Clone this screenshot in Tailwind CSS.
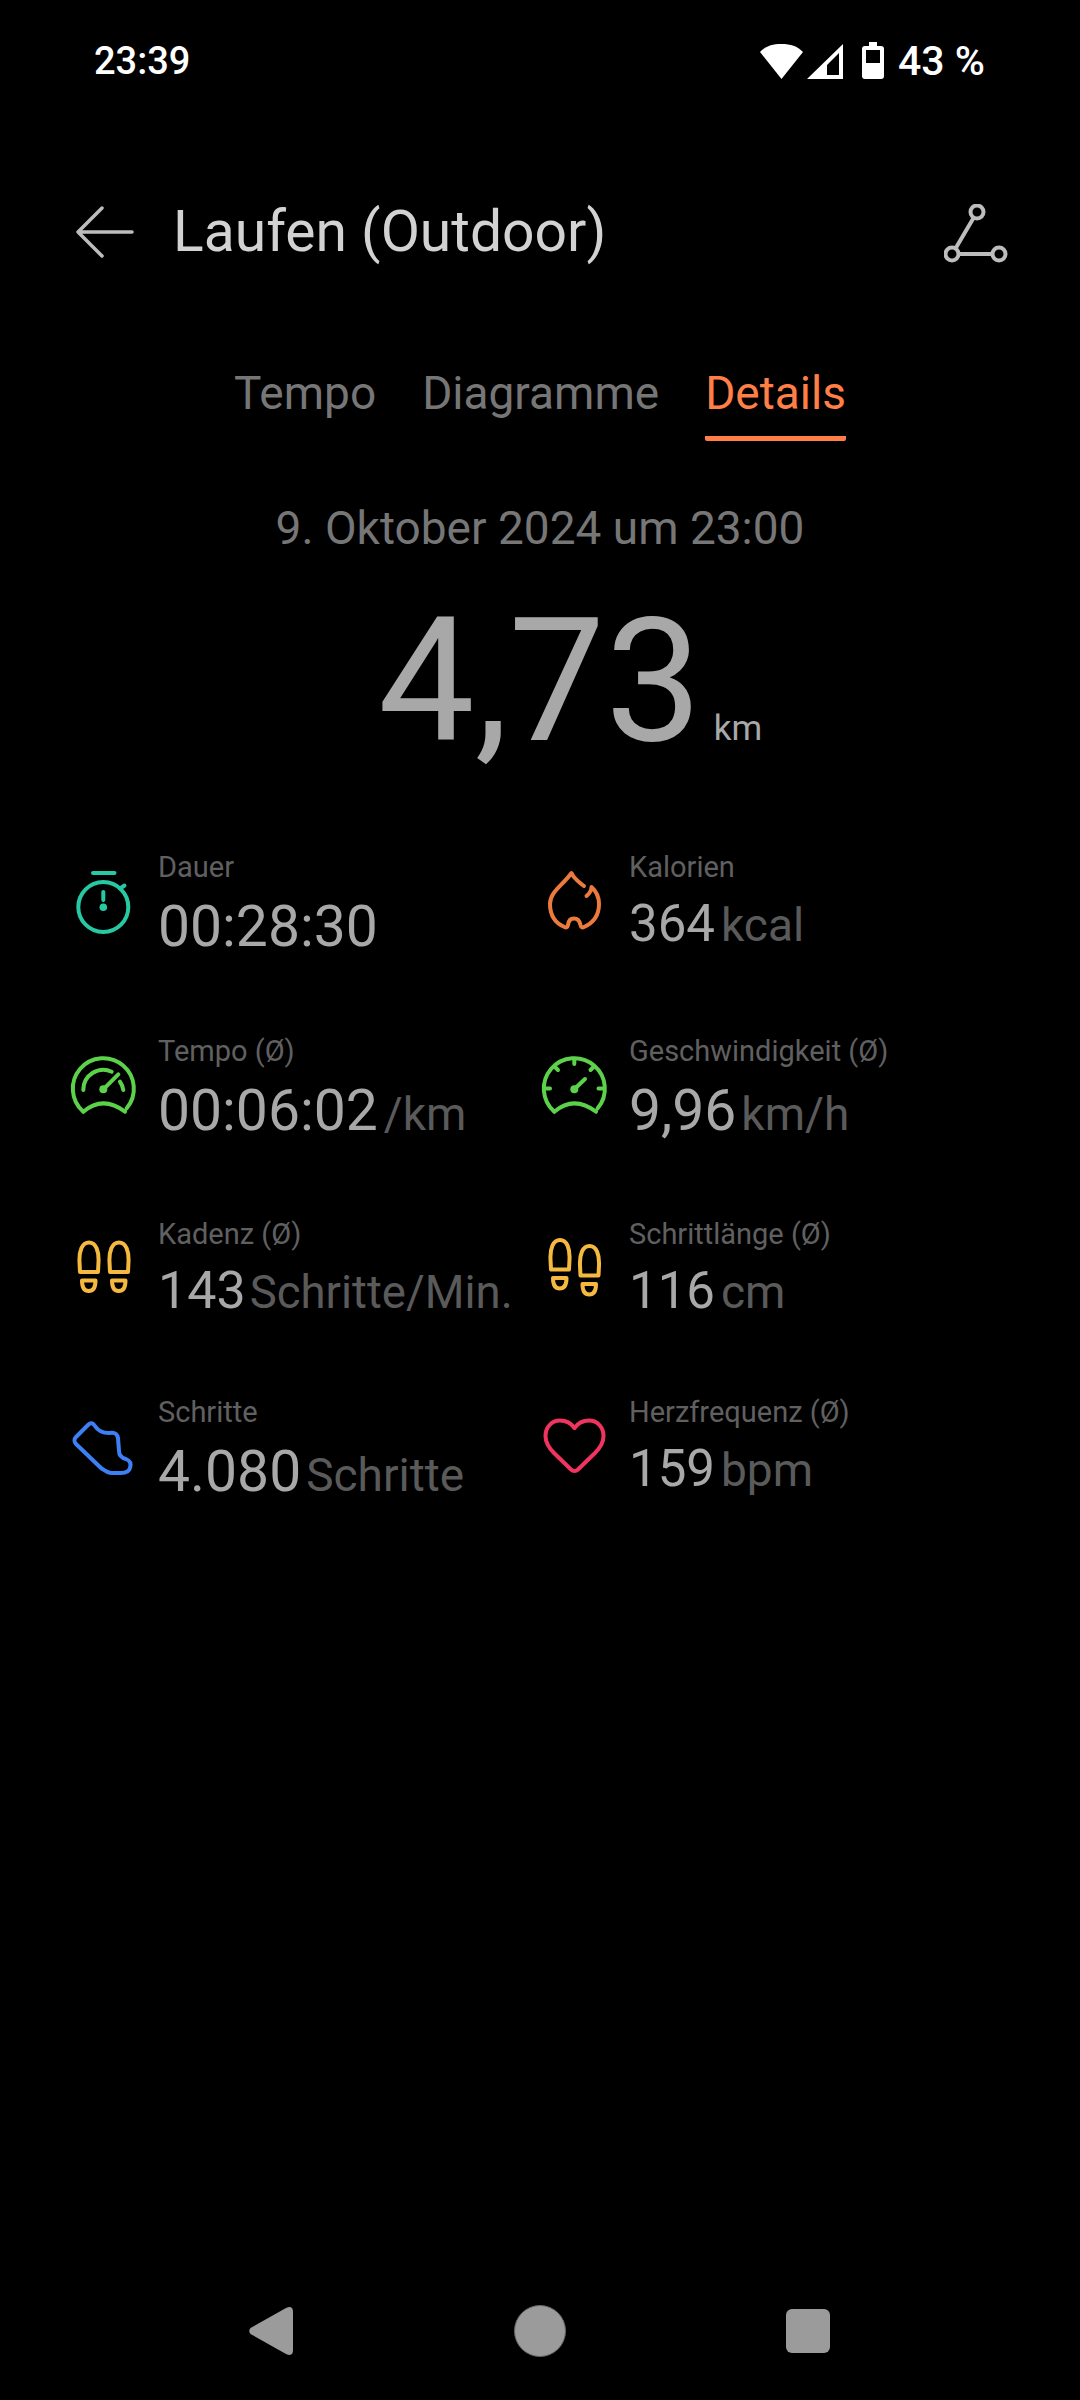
<!DOCTYPE html>
<html lang="de">
<head>
  <meta charset="UTF-8" />
  <meta name="viewport" content="width=device-width, initial-scale=1.0"/>
  <title>Laufen (Outdoor)</title>
  <script src="https://cdn.jsdelivr.net/npm/@tailwindcss/browser@4"></script>
</head>
<body class="bg-black">
<div class="w-[1080px] h-[2400px] flex flex-col font-['Roboto',sans-serif] overflow-hidden">

  <!-- Status bar -->
  <div class="h-[122px] flex justify-between pl-[94px] pr-[95px] pt-[38px] text-white font-medium text-[38px] leading-[46px]">
    <span>23:39</span>
    <div class="flex items-start">
      <svg class="w-[90px] h-[46px]" viewBox="0 0 90 46" fill="#fff">
        <path d="M2 14 C8 8 14 6 23.500 6 C33 6 39 8 45 14 L23.500 41 Z"/>
        <path d="M49 41 L85 6 V41 Z M69 27 V37 H81 V15 Z" fill-rule="evenodd"/>
      </svg>
      <svg class="w-[22px] h-[46px] ml-[14px]" viewBox="0 0 22 46" fill="#fff">
        <path d="M7 4 H15 V8 H19 Q22 8 22 11 V38 Q22 41 19 41 H3 Q0 41 0 38 V11 Q0 8 3 8 H7 Z M4 12 V25 H18 V12 Z" fill-rule="evenodd"/>
      </svg>
      <span class="ml-[14px] text-[41px]">43 %</span>
    </div>
  </div>

  <!-- Header -->
  <div class="h-[80px] mt-[70px] flex items-center justify-between pl-[72px] pr-[72px]">
    <div class="flex items-center">
      <svg class="w-[64px] h-[56px]" viewBox="0 0 64 56" fill="none" stroke="#bdbdbd" stroke-width="3.500" stroke-linecap="round" stroke-linejoin="round">
        <path d="M60 28 H6 M30 4 L6 28 L30 52"/>
      </svg>
      <h1 class="ml-[37px] text-[57px] leading-[80px] text-[#d2d2d2]">Laufen (Outdoor)</h1>
    </div>
    <svg class="w-[64px] h-[60px] mt-[3px]" viewBox="0 0 64 60" fill="none" stroke="#bdbdbd" stroke-width="4">
      <circle cx="33" cy="8" r="6.500"/><circle cx="8" cy="50" r="6.500"/><circle cx="55" cy="50" r="6.500"/>
      <path d="M29.500 14 L11.500 44.500 M14.500 50 H48.500"/>
    </svg>
  </div>

  <!-- Tabs -->
  <div class="mt-[91px] flex justify-center gap-[46px] text-[46px] leading-[60px] text-[#767676]">
    <div class="pb-[18px]">Tempo</div>
    <div class="pb-[18px]">Diagramme</div>
    <div class="pb-[13px] border-b-[5px] border-[#ff7f47] text-[#ff7f47] rounded-b-[2px]">Details</div>
  </div>

  <div class="mt-[57px] text-center text-[46px] leading-[60px] text-[#767676]">9. Oktober 2024 um 23:00</div>

  <!-- Distance -->
  <div class="mt-[23px] h-[200px] flex items-baseline pl-[378px]">
    <span class="text-[172px] leading-[200px] text-[#a8a8a8]">4,73</span>
    <span class="ml-[12px] text-[35px] leading-[40px] text-[#a8a8a8]">km</span>
  </div>

  <!-- Stats -->
  <div class="mt-[69px] pl-[68px] grid grid-cols-[471px_471px] grid-rows-[184px_183px_178px_120px]">

    <div class="flex">
      <svg class="w-[70px] h-[70px] mt-[20px] shrink-0" viewBox="0 0 70 70" fill="none" stroke="#26c9a1" stroke-width="4" stroke-linecap="round">
        <path d="M25 3 H46.500"/>
        <circle cx="35.300" cy="37" r="25"/>
        <path d="M52 18.500 L56.500 15.500 M35.300 22 V30"/>
        <circle cx="35.300" cy="37.300" r="3.800" fill="#26c9a1" stroke="none"/>
      </svg>
      <div class="ml-[20px]">
        <div class="text-[29px] leading-[1.172] text-[#606060]">Dauer</div>
        <div class="mt-[10px] flex items-baseline">
          <span class="text-[57px] leading-[1.172] text-[#a8a8a8]">00:28:30</span>
        </div>
      </div>
    </div>

    <div class="flex">
      <svg class="w-[70px] h-[70px] mt-[20px] shrink-0" viewBox="0 0 70 70" fill="none" stroke="#ec7a3c" stroke-width="4" stroke-linecap="round" stroke-linejoin="round">
        <path d="M47.500 26 C51 23 52.500 20 52.500 17 C58 22 60 28 60 34 C60 46 54 53 45 57 C43 58 42 57 41.500 55 C40.500 50 38 48.500 35 48.500 C32 48.500 29.500 50 29 55 C28.500 57 27.500 58 25.500 57 C16 53 11 45 11 34 C11 22 23 16 32.500 3 C35 9 40 12 45 16"/>
      </svg>
      <div class="ml-[20px]">
        <div class="text-[29px] leading-[1.172] text-[#606060]">Kalorien</div>
        <div class="mt-[10px] flex items-baseline">
          <span class="text-[51px] leading-[1.172] text-[#a8a8a8]">364</span>
          <span class="ml-[6px] text-[46px] leading-[1.172] text-[#5a5a5a]">kcal</span>
        </div>
      </div>
    </div>

    <div class="flex">
      <svg class="w-[70px] h-[70px] mt-[20px] shrink-0" viewBox="0 0 70 70" fill="none" stroke="#5cd24a" stroke-width="4" stroke-linecap="round">
        <path d="M58.700 54.300 A30.500 30.500 0 1 0 15.300 57.700 Q35 41 57 57.700"/>
        <path d="M15.300 36 A20 20 0 0 1 43.700 17.700 M52 27.700 Q54.500 31 55.300 36"/>
        <path d="M35.300 35.300 L50.300 20.300"/>
        <circle cx="35.300" cy="35.300" r="4" fill="#5cd24a" stroke="none"/>
      </svg>
      <div class="ml-[20px]">
        <div class="text-[29px] leading-[1.172] text-[#606060]">Tempo (Ø)</div>
        <div class="mt-[10px] flex items-baseline">
          <span class="text-[57px] leading-[1.172] text-[#a8a8a8]">00:06:02</span>
          <span class="ml-[6px] text-[46px] leading-[1.172] text-[#5a5a5a]">/km</span>
        </div>
      </div>
    </div>

    <div class="flex">
      <svg class="w-[70px] h-[70px] mt-[20px] shrink-0" viewBox="0 0 70 70" fill="none" stroke="#5cd24a" stroke-width="4" stroke-linecap="round">
        <path d="M58.700 54.300 A30.500 30.500 0 1 0 15.300 57.700 Q35 41 57 57.700"/>
        <path d="M35.300 6 V10 M16 13 L19 16 M54.500 13 L51.500 16 M7 34.500 H11 M63.500 34.500 H59.500"/>
        <path d="M35.300 35.300 L46 25"/>
        <circle cx="35.300" cy="35.300" r="4" fill="#5cd24a" stroke="none"/>
      </svg>
      <div class="ml-[20px]">
        <div class="text-[29px] leading-[1.172] text-[#606060]">Geschwindigkeit (Ø)</div>
        <div class="mt-[10px] flex items-baseline">
          <span class="text-[57px] leading-[1.172] text-[#a8a8a8]">9,96</span>
          <span class="ml-[5px] text-[46px] leading-[1.172] text-[#5a5a5a]">km/h</span>
        </div>
      </div>
    </div>

    <div class="flex">
      <svg class="w-[70px] h-[70px] mt-[20px] shrink-0" viewBox="0 0 70 70" fill="none" stroke="#f5b93f" stroke-width="4" stroke-linejoin="round">
        <path d="M11.500 25 C11 14 14 5.500 21 5.500 C28 5.500 31 14 30.500 25 L30 35 H12 Z M14 43.500 H27.500 C27.500 50 25.500 54 20.700 54 C16 54 14 50 14 43.500 Z"/>
        <path transform="translate(30 0)" d="M11.500 25 C11 14 14 5.500 21 5.500 C28 5.500 31 14 30.500 25 L30 35 H12 Z M14 43.500 H27.500 C27.500 50 25.500 54 20.700 54 C16 54 14 50 14 43.500 Z"/>
      </svg>
      <div class="ml-[20px]">
        <div class="text-[29px] leading-[1.172] text-[#606060]">Kadenz (Ø)</div>
        <div class="mt-[10px] flex items-baseline">
          <span class="text-[52px] leading-[1.172] text-[#a8a8a8]">143</span>
          <span class="ml-[4px] text-[45.500px] leading-[1.172] text-[#5a5a5a] whitespace-nowrap">Schritte/Min.</span>
        </div>
      </div>
    </div>

    <div class="flex">
      <svg class="w-[70px] h-[70px] mt-[20px] shrink-0" viewBox="0 0 70 70" fill="none" stroke="#f5b93f" stroke-width="4" stroke-linejoin="round">
        <path transform="translate(0 -2.500)" d="M11.500 25 C11 14 14 5.500 21 5.500 C28 5.500 31 14 30.500 25 L30 35 H12 Z M14 43.500 H27.500 C27.500 50 25.500 54 20.700 54 C16 54 14 50 14 43.500 Z"/>
        <path transform="translate(29.500 3.500)" d="M11.500 25 C11 14 14 5.500 21 5.500 C28 5.500 31 14 30.500 25 L30 35 H12 Z M14 43.500 H27.500 C27.500 50 25.500 54 20.700 54 C16 54 14 50 14 43.500 Z"/>
      </svg>
      <div class="ml-[20px]">
        <div class="text-[29px] leading-[1.172] text-[#606060]">Schrittlänge (Ø)</div>
        <div class="mt-[10px] flex items-baseline">
          <span class="text-[51px] leading-[1.172] text-[#a8a8a8]">116</span>
          <span class="ml-[6px] text-[46px] leading-[1.172] text-[#5a5a5a]">cm</span>
        </div>
      </div>
    </div>

    <div class="flex">
      <svg class="w-[70px] h-[70px] mt-[20px] shrink-0" viewBox="0 0 70 70" fill="none" stroke="#3d7ff5" stroke-width="4" stroke-linejoin="round">
        <path d="M8 22 L20 10 C23 7 25 8 27 11 C30 16 34 18 41 18 C46 17 49 18 50 23 L51 36 C51 41 54 43 58 44 C63 46 63 50 62 53 C61 57 58 58 53 58 L44 58 C39 58 36 55 33 53 L8 29 C6 27 6 24 8 22 Z"/>
      </svg>
      <div class="ml-[20px]">
        <div class="text-[29px] leading-[1.172] text-[#606060]">Schritte</div>
        <div class="mt-[10px] flex items-baseline">
          <span class="text-[57px] leading-[1.172] text-[#a8a8a8]">4.080</span>
          <span class="ml-[5px] text-[46px] leading-[1.172] text-[#5a5a5a]">Schritte</span>
        </div>
      </div>
    </div>

    <div class="flex">
      <svg class="w-[70px] h-[70px] mt-[20px] shrink-0" viewBox="0 0 70 70" fill="none" stroke="#f0345f" stroke-width="4" stroke-linejoin="round">
        <path d="M35.500 13 C32 8 27 5.500 21 5.500 C12 5.500 6.500 13 6.500 21 C6.500 28 10 33 15 38 L32 54.500 C34 56.500 37 56.500 39 54.500 L56 38 C61 33 64.500 28 64.500 21 C64.500 13 59 5.500 50 5.500 C44 5.500 39 8 35.500 13 Z"/>
      </svg>
      <div class="ml-[20px]">
        <div class="text-[29px] leading-[1.172] text-[#606060]">Herzfrequenz (Ø)</div>
        <div class="mt-[10px] flex items-baseline">
          <span class="text-[51px] leading-[1.172] text-[#a8a8a8]">159</span>
          <span class="ml-[6px] text-[46px] leading-[1.172] text-[#5a5a5a]">bpm</span>
        </div>
      </div>
    </div>
  </div>

  <!-- Navigation bar -->
  <div class="mt-auto mb-[43px] pl-[249px] flex items-center">
    <svg class="w-[44px] h-[48px]" viewBox="0 0 44 48" fill="#9b9b9b">
      <path d="M1.500 21 L37 1 Q44 -2 44 5 V43 Q44 50 37 47 L1.500 27 Q-1 24 1.500 21 Z"/>
    </svg>
    <div class="ml-[221px] w-[52px] h-[52px] rounded-full bg-[#9b9b9b] border border-[#666666]"></div>
    <div class="ml-[220px] w-[44px] h-[44px] rounded-[6px] bg-[#9b9b9b]"></div>
  </div>
</div>
</body>
</html>
